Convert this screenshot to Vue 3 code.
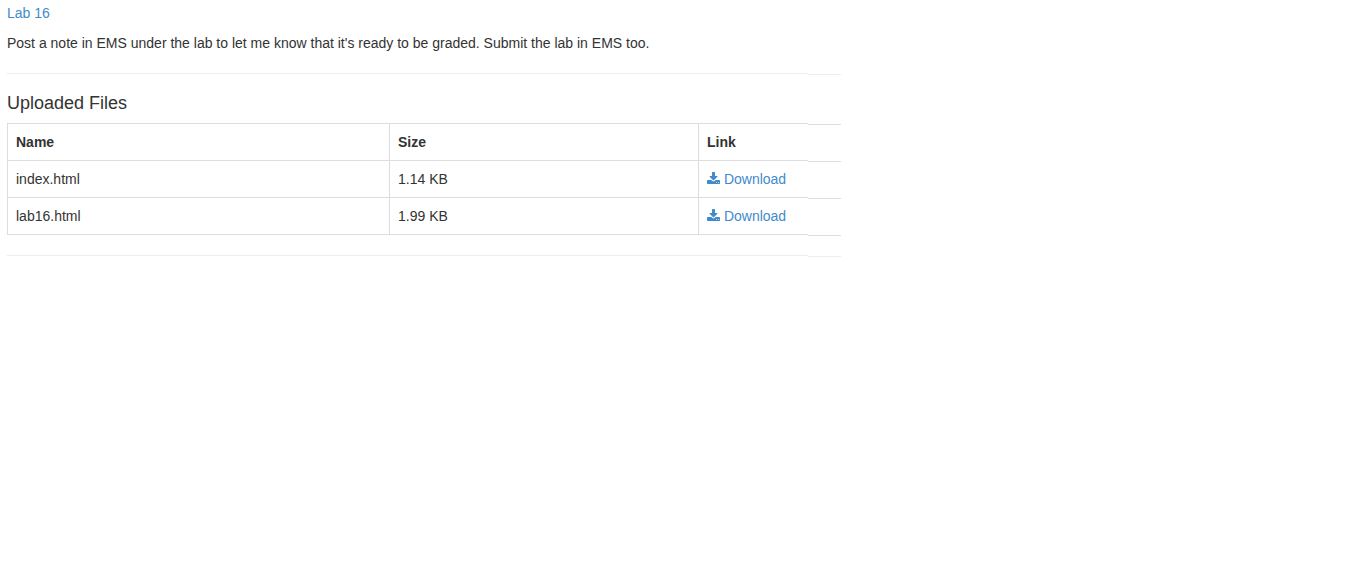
<script setup>
const files = [
  { name: 'index.html', size: '1.14 KB' },
  { name: 'lab16.html', size: '1.99 KB' },
]
</script>

<template>
  <div class="page">
    <main class="content">
      <p><a href="#">Lab 16</a></p>
      <p class="note">Post a note in EMS under the lab to let me know that it's ready to be graded. Submit the lab in EMS too.</p>
      <hr />
      <h4>Uploaded Files</h4>
      <table>
        <colgroup>
          <col class="col-name" />
          <col class="col-size" />
          <col />
        </colgroup>
        <thead>
          <tr>
            <th scope="col">Name</th>
            <th scope="col">Size</th>
            <th scope="col">Link</th>
          </tr>
        </thead>
        <tbody>
          <tr v-for="file in files" :key="file.name">
            <td>{{ file.name }}</td>
            <td>{{ file.size }}</td>
            <td>
              <a href="#"><svg class="icon" viewBox="0 -128 1664 1536" aria-hidden="true"><path d="M1280 1216q0-26-19-45t-45-19-45 19-19 45 19 45 45 19 45-19 19-45zm256 0q0-26-19-45t-45-19-45 19-19 45 19 45 45 19 45-19 19-45zm128-224v320q0 40-28 68t-68 28H96q-40 0-68-28t-28-68V992q0-40 28-68t68-28h465l135 136q58 56 136 56t136-56l136-136h464q40 0 68 28t28 68zm-325-569q17 41-14 70l-448 448q-18 19-45 19t-45-19L339 493q-31-29-14-70 17-39 59-39h256V-64q0-26 19-45t45-19h256q26 0 45 19t19 45v448h256q42 0 59 39z" /></svg> Download</a>
            </td>
          </tr>
        </tbody>
      </table>
      <hr />
    </main>
    <!-- Outer margin strip that carries the rules past the content column -->
    <div class="edge" aria-hidden="true">
      <div class="edge-rule edge-top"></div>
      <div class="edge-row" v-for="n in files.length + 1" :key="n"></div>
      <div class="edge-row edge-end"></div>
      <div class="edge-rule"></div>
    </div>
  </div>
</template>

<style>
body {
  margin: 0;
  background: #fff;
}
</style>

<style scoped>
.page {
  display: flex;
  width: 62%;
  padding: 3px 2px 0 7px;
  box-sizing: border-box;
  font: 14px/20px "Liberation Sans", Arial, sans-serif;
  color: #333;
}
.content {
  flex: 1;
  min-width: 0;
}
p {
  margin: 0 0 10px;
}
.note {
  margin-bottom: 20px;
}
a {
  color: #428bca;
  text-decoration: none;
}
hr {
  margin: 20px 0;
  border: 0;
  border-top: 1px solid #eee;
}
h4 {
  margin: 0 0 10px;
  font-size: 18px;
  line-height: 19px;
  font-weight: 500;
}
table {
  width: 100%;
  table-layout: fixed;
  border-collapse: collapse;
}
.col-name {
  width: 382px;
}
.col-size {
  width: 309px;
}
th,
td {
  padding: 8px;
  text-align: left;
  border: 1px solid #ddd;
}
th:last-child,
td:last-child {
  border-right: 0;
}
.icon {
  width: 13px;
  height: 12px;
  fill: currentColor;
  vertical-align: baseline;
}
.edge {
  flex: 0 0 33px;
  padding-top: 71px;
}
.edge-rule {
  border-top: 1px solid #eee;
}
.edge-top {
  height: 49px;
}
.edge-row {
  height: 36px;
  border-top: 1px solid #ddd;
}
.edge-end {
  height: 20px;
}
</style>
